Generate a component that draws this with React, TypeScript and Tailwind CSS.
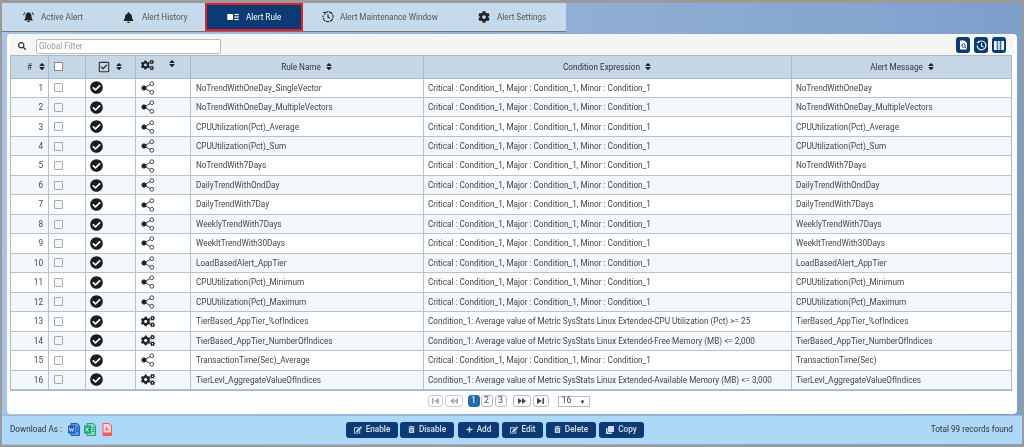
import type { ReactNode } from "react";
import {
  FaBell,
  FaCheckCircle,
  FaClone,
  FaCog,
  FaCogs,
  FaEdit,
  FaPlus,
  FaRegCheckSquare,
  FaSearch,
  FaSort,
  FaTrashAlt,
} from "react-icons/fa";

const COND = "Critical : Condition_1, Major : Condition_1, Minor : Condition_1";

const rows = [
  ["NoTrendWithOneDay_SingleVector", COND, "NoTrendWithOneDay", "share"],
  ["NoTrendWithOneDay_MultipleVectors", COND, "NoTrendWithOneDay_MultipleVectors", "share"],
  ["CPUUtilization(Pct)_Average", COND, "CPUUtilization(Pct)_Average", "share"],
  ["CPUUtilization(Pct)_Sum", COND, "CPUUtilization(Pct)_Sum", "share"],
  ["NoTrendWith7Days", COND, "NoTrendWith7Days", "share"],
  ["DailyTrendWithOndDay", COND, "DailyTrendWithOndDay", "share"],
  ["DailyTrendWith7Day", COND, "DailyTrendWith7Days", "share"],
  ["WeeklyTrendWith7Days", COND, "WeeklyTrendWith7Days", "share"],
  ["WeekltTrendWith30Days", COND, "WeekltTrendWith30Days", "share"],
  ["LoadBasedAlert_AppTier", COND, "LoadBasedAlert_AppTier", "share"],
  ["CPUUtilization(Pct)_Minimum", COND, "CPUUtilization(Pct)_Minimum", "share"],
  ["CPUUtilization(Pct)_Maximum", COND, "CPUUtilization(Pct)_Maximum", "share"],
  ["TierBased_AppTier_%ofIndices", "Condition_1: Average value of Metric SysStats Linux Extended-CPU Utilization (Pct) >= 25", "TierBased_AppTier_%ofIndices", "cogs"],
  ["TierBased_AppTier_NumberOfIndices", "Condition_1: Average value of Metric SysStats Linux Extended-Free Memory (MB) <= 2,000", "TierBased_AppTier_NumberOfIndices", "cogs"],
  ["TransactionTime(Sec)_Average", COND, "TransactionTime(Sec)", "share"],
  ["TierLevl_AggregateValueOfIndices", "Condition_1: Average value of Metric SysStats Linux Extended-Available Memory (MB) <= 3,000", "TierLevl_AggregateValueOfIndices", "cogs"],
];

function ShareIcon() {
  return (
    <svg width="14" height="14" viewBox="0 0 14 14" fill="none" stroke="#333" strokeWidth="0.9">
      <line x1="3" y1="7" x2="10.500" y2="2.800" />
      <line x1="3" y1="7" x2="10.500" y2="11.200" />
      <circle cx="3" cy="7" r="2.200" fill="#1d1d1d" />
      <circle cx="10.800" cy="2.700" r="1.900" fill="#fff" />
      <circle cx="10.800" cy="11.300" r="1.900" fill="#fff" />
    </svg>
  );
}

function BellAlarm() {
  return (
    <svg width="13" height="12" viewBox="0 0 14 13" fill="#222">
      <path d="M7 1.200c-.5 0-.8.3-.8.7C4.600 2.300 3.800 3.600 3.800 5.200c0 2.300-.6 3.400-1.200 4.200v.8h8.800v-.8c-.6-.8-1.200-1.900-1.200-4.200 0-1.600-.8-2.900-2.400-3.300 0-.4-.3-.7-.8-.7z" />
      <path d="M5.700 10.800h2.600c0 .8-.6 1.300-1.300 1.300s-1.300-.5-1.300-1.300z" />
      <path d="M2.900 1 1 4.200l.9.5 1.800-3.200zM11.100 1l1.900 3.200-.9.5-1.800-3.200z" />
    </svg>
  );
}

function RuleCard() {
  return (
    <svg width="12" height="8" viewBox="0 0 13 9" fill="#fff">
      <rect x="0" y="1" width="6.500" height="7" rx="1" />
      <rect x="8" y="1" width="5" height="1.400" />
      <rect x="8" y="3.800" width="5" height="1.400" />
      <rect x="8" y="6.600" width="5" height="1.400" />
    </svg>
  );
}

function MaintenanceClock() {
  return (
    <svg width="12" height="12" viewBox="0 0 12 12" fill="none" stroke="#222" strokeWidth="1.100">
      <path d="M3 1.800A5 5 0 1 1 1.200 4.500" strokeDasharray="3.500 .8" />
      <path d="M.9 1.300 3.200 1.700 2.700 4" strokeWidth=".9" />
      <path d="M6 3.300V6.200l2 1.100" />
    </svg>
  );
}

function FileIcon({ color, tint, mark }: { color: string; tint: string; mark: "w" | "x" | "p" }) {
  return (
    <svg width="12" height="13" viewBox="0 0 12 13">
      <path d="M3 .5h6l2.500 2v10H3z" fill={tint} stroke={color} strokeWidth="1" />
      {mark !== "p" && <rect x="0" y="2.500" width="7" height="8" fill={color} />}
      {mark !== "p" && <path d="M8 4.500h2.500M8 6.500h2.500M8 8.500h2.500" stroke={color} strokeWidth="1" />}
      {mark === "w" && <path d="M1.300 4.500l1 4 1.200-3 1.200 3 1-4" stroke="#fff" strokeWidth=".7" fill="none" />}
      {mark === "x" && <path d="M1.700 4.500l2.800 4M4.500 4.500l-2.800 4" stroke="#fff" strokeWidth=".8" fill="none" />}
      {mark === "p" && <path d="M3 9.500h8.500v3H3zM5 7.500c1-1 1.500-3 1-4.500 1 2 2 3.500 3.500 4-1.500 0-3 0-4.500.5z" fill={color} />}
    </svg>
  );
}

// pad = left edge of the icon inside the tab, box = distance from icon to label
function Tab({ icon, label, active, w, pad, box }: { icon: ReactNode; label: string; active?: boolean; w: string; pad: string; box: string }) {
  return (
    <div
      className={`${w} ${pad} flex h-[28px] items-center ${
        active ? "border-2 border-[#e5202e] bg-[#0b3a75] text-white" : "text-[#555]"
      }`}
    >
      <span className={`${box} flex shrink-0 items-center`}>{icon}</span>
      <span>{label}</span>
    </div>
  );
}

function Sort() {
  return <FaSort className="inline-block h-[9px] w-[8px] text-[#222]" />;
}

function ActionButton({ icon, label, w }: { icon: ReactNode; label: string; w: string }) {
  return (
    <button className={`${w} flex h-[16px] items-center justify-center gap-[4px] rounded-[3px] bg-[#0b3a75] text-[8.200px] font-medium text-[#d5e0ee]`}>
      {icon}
      {label}
    </button>
  );
}

function PageBtn({ children, w, active, muted }: { children: ReactNode; w: string; active?: boolean; muted?: boolean }) {
  const look = active
    ? "border-[#1d6fa5] bg-[#1d6fa5] text-white"
    : muted
      ? "border-[#ccc] text-[#aaa]"
      : "border-[#bbb] text-[#444]";
  return (
    <div className={`${w} flex h-[12px] items-center justify-center rounded-[3px] border text-[9px] ${look}`}>
      {children}
    </div>
  );
}

function Skip({ flip }: { flip?: boolean }) {
  return (
    <svg width="7" height="6" viewBox="0 0 7 6" fill="currentColor" className={flip ? "rotate-180" : ""}>
      <path d="M5.500 0H7v6H5.500zM0 0l5 3-5 3z" />
    </svg>
  );
}

function Double({ flip }: { flip?: boolean }) {
  return (
    <svg width="8" height="6" viewBox="0 0 8 6" fill="currentColor" className={flip ? "rotate-180" : ""}>
      <path d="M0 0l4 3-4 3zM4 0l4 3-4 3z" />
    </svg>
  );
}

const COLS = "grid grid-cols-[38px_37px_50px_55px_233px_368px_221px]";

export default function App() {
  return (
    <div className="flex h-[447px] w-[1024px] flex-col overflow-hidden border-[2px] border-t-[3px] border-[#9a9a9a] bg-gradient-to-r from-[#a9c4e4] to-[#7f9fcb] font-['Roboto',sans-serif] text-[8.200px] text-[#444] blur-[0.3px]">
      <div className="flex h-[29px] w-[564px] shrink-0 items-center border-b border-[#777] bg-[#c6daed] pl-[3px]">
        <Tab w="w-[96px]" pad="pl-[17px]" box="w-[19px]" icon={<BellAlarm />} label="Active Alert" />
        <Tab w="w-[104px]" pad="pl-[22px]" box="w-[19px]" icon={<FaBell className="h-[11px] w-[11px] text-[#222]" />} label="Alert History" />
        <Tab w="w-[98px]" pad="pl-[20px]" box="w-[19px]" icon={<RuleCard />} label="Alert Rule" active />
        <Tab w="w-[157px]" pad="pl-[19px]" box="w-[18px]" icon={<MaintenanceClock />} label="Alert Maintenance Window" />
        <Tab w="w-[104px]" pad="pl-[18px]" box="w-[19px]" icon={<FaCog className="h-[12px] w-[12px] text-[#222]" />} label="Alert Settings" />
      </div>

      <div className="mx-[5px] mt-[2px] flex h-[380px] shrink-0 flex-col rounded-[4px] bg-white px-[3px]">
        <div className="flex h-[21px] shrink-0 items-center justify-between rounded-t-[4px] bg-[#f5f5f5] pt-[3px]">
          <div className="flex items-center">
            <FaSearch className="ml-[8px] h-[8px] w-[8px] text-[#333]" />
            <div className="ml-[10px] flex h-[15px] w-[185px] items-center rounded-[2px] border border-[#bbb] bg-white px-[2px] text-[#999]">
              Global Filter
            </div>
          </div>
          <div className="mb-[2px] flex items-center gap-[4px] pr-[8px]">
            <div className="flex h-[16px] w-[14px] items-center justify-center rounded-[3px] bg-[#0b3a75]">
              <svg width="9" height="10" viewBox="0 0 9 10" fill="none">
                <path d="M1 .500h4.500L8 3v6.500H1z" fill="#fff" />
                <circle cx="4.500" cy="5.500" r="1.700" stroke="#0b3a75" />
                <path d="M6 7l1.500 1.500" stroke="#0b3a75" />
              </svg>
            </div>
            <div className="flex h-[16px] w-[14px] items-center justify-center rounded-[3px] bg-[#0b3a75]">
              <svg width="11" height="11" viewBox="0 0 10 10" fill="none" stroke="#fff" strokeWidth="1">
                <path d="M2 2.200A4 4 0 1 1 1 5" />
                <path d="M.6 2.400h2V.6" strokeWidth=".8" />
                <path d="M5 2.800V5.300l1.800 1" />
              </svg>
            </div>
            <div className="flex h-[16px] w-[14px] items-center justify-center rounded-[3px] bg-[#0b3a75]">
              <svg width="10" height="9" viewBox="0 0 10 9" fill="#fff">
                <rect x="0" y="0" width="2.700" height="9" />
                <rect x="3.600" y="0" width="2.700" height="9" fill="#bcd9ee" />
                <rect x="7.300" y="0" width="2.700" height="9" />
              </svg>
            </div>
          </div>
        </div>

        <div className="w-[1002px] border-x border-b border-[#a9b8c8]">
          <div className={`${COLS} h-[23.500px] items-stretch border-y border-[#a9b8c8] bg-[#c5d6e7] text-[#333]`}>
            <div className="flex items-center gap-[6px] border-r border-[#a9b8c8] pl-[16px]">
              <span>#</span>
              <Sort />
            </div>
            <div className="flex items-center border-r border-[#a9b8c8] pl-[5px]">
              <div className="h-[9px] w-[9px] border border-[#888] bg-white" />
            </div>
            <div className="flex items-center gap-[5px] border-r border-[#a9b8c8] pl-[12px]">
              <FaRegCheckSquare className="h-[12px] w-[12px] text-[#333]" />
              <Sort />
            </div>
            <div className="flex items-start gap-[14px] border-r border-[#a9b8c8] pl-[5px] pt-[3px]">
              <FaCogs className="h-[12px] w-[13px] text-[#222]" />
              <Sort />
            </div>
            <div className="flex items-center justify-center gap-[4px] border-r border-[#a9b8c8]">
              Rule Name <Sort />
            </div>
            <div className="flex items-center justify-center gap-[4px] border-r border-[#a9b8c8]">
              Condition Expression <Sort />
            </div>
            <div className="flex items-center justify-center gap-[4px]">
              Alert Message <Sort />
            </div>
          </div>

          {rows.map((r, i) => (
            <div
              key={i}
              className={`${COLS} h-[19.470px] items-stretch border-b border-[#b4c3d3] ${i % 2 ? "bg-[#f5f8fb]" : "bg-white"}`}
            >
              <div className="flex items-center justify-end border-r border-[#b4c3d3] pr-[5px]">{i + 1}</div>
              <div className="flex items-center border-r border-[#b4c3d3] pl-[5px]">
                <div className="h-[9px] w-[9px] rounded-[1px] border border-[#aaa] bg-[#f8f8f8]" />
              </div>
              <div className="flex items-center border-r border-[#b4c3d3] pl-[4px]">
                <FaCheckCircle className="h-[13px] w-[13px] text-[#1d1d1d]" />
              </div>
              <div className="flex items-center border-r border-[#b4c3d3] pl-[5px]">
                {r[3] === "share" ? <ShareIcon /> : <FaCogs className="h-[13px] w-[14px] text-[#222]" />}
              </div>
              <div className="flex items-center border-r border-[#b4c3d3] pl-[5px]">{r[0]}</div>
              <div className="flex items-center border-r border-[#b4c3d3] pl-[4px]">{r[1]}</div>
              <div className="flex items-center pl-[4px]">{r[2]}</div>
            </div>
          ))}
        </div>

        <div className="mt-[4px] flex items-center justify-center pr-[7px] text-[#444]">
          <PageBtn w="w-[15px] mr-[2px]" muted><Skip flip /></PageBtn>
          <PageBtn w="w-[18px] mr-[5px]" muted><Double flip /></PageBtn>
          <PageBtn w="w-[12px] mr-[1px]" active>1</PageBtn>
          <PageBtn w="w-[12px] mr-[2px]">2</PageBtn>
          <PageBtn w="w-[12px] mr-[6px]">3</PageBtn>
          <PageBtn w="w-[18px] mr-[2px]"><Double /></PageBtn>
          <PageBtn w="w-[16px] mr-[9px]"><Skip /></PageBtn>
          <div className="flex h-[11px] w-[32px] items-center justify-between border border-[#bbb] px-[3px] text-[9px]">
            16
            <span className="text-[6px] text-[#333]">▼</span>
          </div>
        </div>
      </div>

      <div className="mt-[1px] flex h-[29px] shrink-0 items-center border-t border-[#9fb4c6] bg-[#aed8f7] pb-[1px] pl-[8px] pr-[9px] text-[#333]">
        <div className="flex w-[336px] shrink-0 items-center gap-[4px]">
          <span className="mr-[2px]">Download As :</span>
          <FileIcon color="#1b5fc1" tint="#5d94dc" mark="w" />
          <FileIcon color="#21a37a" tint="#8fd4bd" mark="x" />
          <FileIcon color="#ee5566" tint="#fbd3d8" mark="p" />
        </div>
        <div className="flex items-center">
          <ActionButton w="w-[52px] mr-[2px]" icon={<FaEdit className="h-[8px] w-[8px]" />} label="Enable" />
          <ActionButton w="w-[54px] mr-[4px]" icon={<FaTrashAlt className="h-[7px] w-[7px]" />} label="Disable" />
          <ActionButton w="w-[41px] mr-[3px]" icon={<FaPlus className="h-[7px] w-[7px]" />} label="Add" />
          <ActionButton w="w-[41px] mr-[3px]" icon={<FaEdit className="h-[8px] w-[8px]" />} label="Edit" />
          <ActionButton w="w-[50px] mr-[3px]" icon={<FaTrashAlt className="h-[7px] w-[7px]" />} label="Delete" />
          <ActionButton w="w-[45px]" icon={<FaClone className="h-[8px] w-[8px]" />} label="Copy" />
        </div>
        <span className="ml-auto">Total 99 records found</span>
      </div>
    </div>
  );
}
